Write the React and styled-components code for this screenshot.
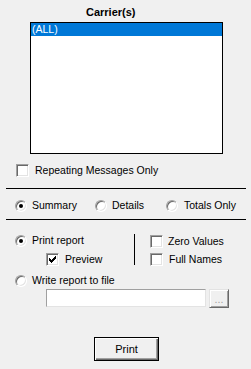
import React from "react";
import styled, { createGlobalStyle } from "styled-components";

const GlobalStyle = createGlobalStyle`
  html, body { margin: 0; padding: 0; background: #f0f0f0; }
  body {
    font-family: "Liberation Sans", Arial, sans-serif;
    font-size: 10.5px;
    line-height: 13px;
    color: #000;
  }
  * { box-sizing: border-box; }
`;

const Window = styled.div`
  width: 251px;
  height: 369px;
  display: flex;
  flex-direction: column;
  align-items: flex-start;
  overflow: hidden;
  background: #f0f0f0;
`;

const Title = styled.div`
  margin-top: 6px;
  padding-left: 86px;
  font-weight: bold;
  font-size: 11px;
  height: 13px;
`;

const ListBox = styled.div`
  margin: 3px 0 0 30px;
  width: 193px;
  height: 132px;
  border: 1px solid #000;
  background: #fff;
`;

const ListItem = styled.div`
  height: 13px;
  padding-left: 1px;
  background: ${(p) => (p.$selected ? "#0078d7" : "transparent")};
  color: ${(p) => (p.$selected ? "#fff" : "#000")};
`;

const Option = styled.label`
  display: flex;
  align-items: center;
  gap: ${(p) => p.$gap ?? 6}px;
  height: 13px;
  margin-top: ${(p) => p.$mt ?? 0}px;
  margin-left: ${(p) => p.$ml ?? 0}px;
  white-space: nowrap;
`;

const CheckBox = styled.span`
  flex: none;
  width: 13px;
  height: 13px;
  border: 1px solid;
  border-color: #a0a0a0 #ffffff #ffffff #a0a0a0;
  box-shadow: inset 1px 1px 0 #696969, inset -1px -1px 0 #e3e3e3;
  background: #fff;
  display: flex;
  align-items: center;
  justify-content: center;
`;

const Radio = styled.span`
  flex: none;
  width: 12px;
  height: 12px;
  border-radius: 50%;
  border: 1px solid;
  border-color: #a0a0a0 #ffffff #ffffff #a0a0a0;
  box-shadow: inset 1px 1px 0 #696969, inset -1px -1px 0 #e3e3e3;
  background: #fff;
  display: flex;
  align-items: center;
  justify-content: center;
  &::after {
    content: "";
    display: ${(p) => (p.$checked ? "block" : "none")};
    width: 4px;
    height: 4px;
    border-radius: 50%;
    background: #000;
  }
`;

const Rule = styled.div`
  margin: ${(p) => p.$mt}px 0 0 6px;
  width: 240px;
  height: 1px;
  background: #000;
  flex: none;
`;

const RadioRow = styled.div`
  display: flex;
  margin-top: 10px;
  padding-left: 15px;
`;

const RadioSlot = styled.div`
  width: ${(p) => p.$w}px;
  flex: none;
`;

const PrintSection = styled.div`
  display: flex;
  align-items: flex-start;
  margin-top: 14px;
`;

const LeftCol = styled.div`
  width: 134px;
  padding-left: 15px;
  display: flex;
  flex-direction: column;
`;

const VDivider = styled.div`
  width: 1px;
  height: 31px;
  background: #000;
  flex: none;
`;

const RightCol = styled.div`
  padding: 1px 0 0 15px;
  display: flex;
  flex-direction: column;
  gap: 5px;
`;

const FileRow = styled.div`
  display: flex;
  align-items: flex-start;
  gap: 3px;
  margin: 2px 0 0 46px;
`;

const PathInput = styled.div`
  width: 160px;
  height: 18px;
  background: #fff;
  border: 1px solid;
  border-color: #a0a0a0 #e3e3e3 #e3e3e3 #a0a0a0;
`;

const BrowseButton = styled.div`
  width: 20px;
  height: 19px;
  background: #f0f0f0;
  border: 1px solid;
  border-color: #e3e3e3 #696969 #696969 #e3e3e3;
  box-shadow: inset 1px 1px 0 #fff, inset -1px -1px 0 #a0a0a0;
  color: #a0a0a0;
  text-align: center;
  padding-top: 3px;
`;

const PrintButton = styled.div`
  margin: 29px 0 0 94px;
  width: 65px;
  height: 24px;
  border: 1px solid #000;
  background: #f0f0f0;
  box-shadow: inset 1px 1px 0 #fff, inset -1px -1px 0 #696969, inset -2px -2px 0 #a0a0a0;
  display: flex;
  align-items: center;
  justify-content: center;
  font-size: 11px;
`;

const Check = () => (
  <svg width="7" height="7" viewBox="0 0 7 7" shapeRendering="crispEdges">
    <path
      d="M6 0h1v3h-1v1h-1v1h-1v1h-1v1h-1v-1h-1v-1h-1v-3h1v1h1v1h1v-1h1v-1h1z"
      fill="#000"
    />
  </svg>
);

export default function App() {
  return (
    <>
      <GlobalStyle />
      <Window>
        <Title>Carrier(s)</Title>
        <ListBox>
          <ListItem $selected>(ALL)</ListItem>
        </ListBox>

        <Option $mt={10} $ml={16}>
          <CheckBox />
          <span>Repeating Messages Only</span>
        </Option>

        <Rule $mt={11} />

        <RadioRow>
          <RadioSlot $w={80}>
            <Option $gap={5}>
              <Radio $checked />
              <span>Summary</span>
            </Option>
          </RadioSlot>
          <RadioSlot $w={71}>
            <Option $gap={5}>
              <Radio />
              <span>Details</span>
            </Option>
          </RadioSlot>
          <RadioSlot $w={80}>
            <Option $gap={6}>
              <Radio />
              <span>Totals Only</span>
            </Option>
          </RadioSlot>
        </RadioRow>

        <Rule $mt={7} />

        <PrintSection>
          <LeftCol>
            <Option $gap={5}>
              <Radio $checked />
              <span>Print report</span>
            </Option>
            <Option $mt={6} $ml={31}>
              <CheckBox>
                <Check />
              </CheckBox>
              <span>Preview</span>
            </Option>
          </LeftCol>
          <VDivider />
          <RightCol>
            <Option $gap={5}>
              <CheckBox />
              <span>Zero Values</span>
            </Option>
            <Option $gap={6}>
              <CheckBox />
              <span>Full Names</span>
            </Option>
          </RightCol>
        </PrintSection>

        <Option $gap={5} $mt={8} $ml={15}>
          <Radio />
          <span>Write report to file</span>
        </Option>

        <FileRow>
          <PathInput />
          <BrowseButton>...</BrowseButton>
        </FileRow>

        <PrintButton>Print</PrintButton>
      </Window>
    </>
  );
}
